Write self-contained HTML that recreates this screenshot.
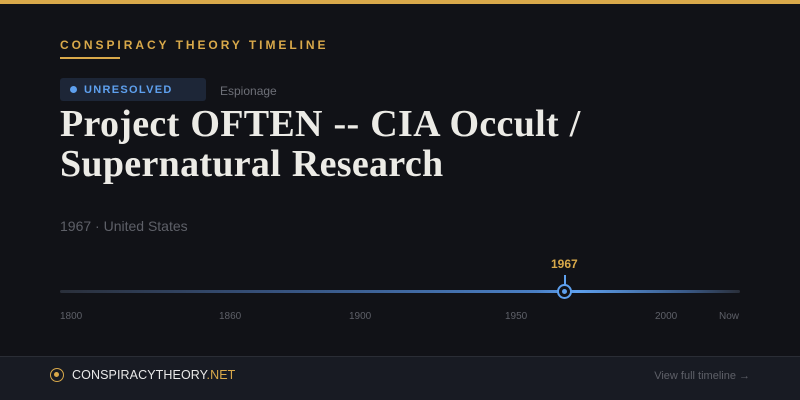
<!DOCTYPE html>
<html><head><meta charset="utf-8"><style>
*{margin:0;padding:0;box-sizing:border-box}
body{width:800px;height:400px;background:#111217;font-family:"Liberation Sans",sans-serif;position:relative;overflow:hidden}
.top{position:absolute;left:0;top:0;width:800px;height:4px;background:#d9a94a}
.kick{position:absolute;left:60px;top:38px;font-size:12px;font-weight:bold;letter-spacing:2.95px;color:#d9a94a}
.ul{position:absolute;left:60px;top:57px;width:60px;height:2px;background:#d9a94a}
.badge{position:absolute;left:60px;top:78px;width:146px;height:23px;background:#1d2637;border-radius:3px}
.badge i{position:absolute;left:10px;top:8px;width:7px;height:7px;border-radius:50%;background:#5ea0ee}
.badge span{position:absolute;left:24px;top:6px;font-size:11px;font-weight:bold;letter-spacing:1.3px;color:#5ea0ee}
.cat{position:absolute;left:220px;top:84px;font-size:12px;color:#6e7078}
h1{position:absolute;left:60px;top:104px;width:700px;font-family:"Liberation Serif",serif;font-weight:bold;font-size:38px;line-height:40px;color:#ecebe6;letter-spacing:0.3px;word-spacing:1px}
.meta{position:absolute;left:60px;top:218px;font-size:14px;color:#5e6068}
.line{position:absolute;left:60px;top:290px;width:680px;height:3px;border-radius:2px;background:linear-gradient(90deg,#2a2f3a 0%,#36507a 30%,#4a7fc4 70%,#5ea0ee 76%,#3a5a88 92%,#2a2f3a 100%)}
.dot{position:absolute;left:557px;top:284px;width:15px;height:15px;border-radius:50%;border:2.5px solid #5ea0ee;background:#111217}
.dot::after{content:"";position:absolute;left:3px;top:3px;width:5px;height:5px;border-radius:50%;background:#5ea0ee}
.stem{position:absolute;left:564px;top:275px;width:2px;height:10px;background:#5ea0ee}
.yr{position:absolute;left:551px;top:257px;font-size:12px;font-weight:bold;color:#d9a94a}
.t{position:absolute;top:311px;font-size:10px;color:#5e6068}
.foot{position:absolute;left:0;top:356px;width:800px;height:44px;background:#181b23;border-top:1px solid #2a2d35}
.logo{position:absolute;left:50px;top:368px;width:14px;height:14px;border-radius:50%;border:1.5px solid #d9a94a}
.logo::after{content:"";position:absolute;left:3px;top:3px;width:5px;height:5px;border-radius:50%;background:#d9a94a}
.brand{position:absolute;left:72px;top:368px;font-size:12.5px;color:#e8e8e8;letter-spacing:0.1px}
.brand b{font-weight:normal;color:#d9a94a}
.view{position:absolute;right:50px;top:370px;font-size:11px;color:#5e6068}
</style></head><body>
<div class="top"></div>
<div class="kick">CONSPIRACY THEORY TIMELINE</div>
<div class="ul"></div>
<div class="badge"><i></i><span>UNRESOLVED</span></div>
<div class="cat">Espionage</div>
<h1>Project OFTEN -- CIA Occult /<br>Supernatural Research</h1>
<div class="meta">1967 · United States</div>
<div class="line"></div>
<div class="stem"></div>
<div class="dot"></div>
<div class="yr">1967</div>
<div class="t" style="left:60px">1800</div>
<div class="t" style="left:219px">1860</div>
<div class="t" style="left:349px">1900</div>
<div class="t" style="left:505px">1950</div>
<div class="t" style="left:655px">2000</div>
<div class="t" style="left:719px">Now</div>
<div class="foot"></div>
<div class="logo"></div>
<div class="brand">CONSPIRACYTHEORY<b>.NET</b></div>
<div class="view">View full timeline →</div>
</body></html>
